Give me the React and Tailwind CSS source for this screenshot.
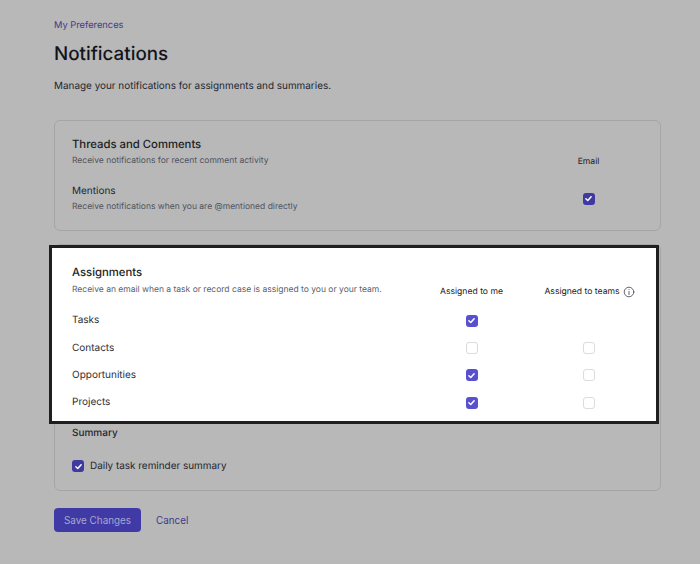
import React from "react";

function Box({ checked, dim }) {
  if (checked) {
    return (
      <span className={`flex h-3 w-3 items-center justify-center rounded-[3px] ${dim ? "bg-[#403aa0]" : "bg-[#5850cf]"}`}>
        <svg viewBox="0 0 12 12" className="h-[9px] w-[9px]" fill="none" stroke="white" strokeWidth="2" strokeLinecap="round" strokeLinejoin="round">
          <path d="M2.5 6.3 5 8.6 9.5 3.6" />
        </svg>
      </span>
    );
  }
  return <span className="block h-3 w-3 rounded-[3px] border border-[#dcdcdc] bg-white" />;
}

function Row({ label, me, team }) {
  return (
    <div className="flex h-[27.4px] items-center">
      <div className="flex-1 text-[10px] text-[#2d3038]">{label}</div>
      <div className="flex w-[117px] justify-center"><Box checked={me} /></div>
      <div className="flex w-[117px] justify-center">{team !== undefined && <Box checked={team} />}</div>
    </div>
  );
}

export default function App() {
  return (
    <div className="h-[564px] w-[700px] overflow-hidden bg-[#b8b8b8] pl-[54px] pt-[18px] font-['Inter',sans-serif] [text-rendering:geometricPrecision]">
      <div className="w-[607px]">
        <div className="pt-[0.5px] text-[9.3px] leading-[14px] text-[#3f3a8c]">My Preferences</div>
        <h1 className="mt-[7.5px] text-[18.8px] font-medium leading-[28px] text-[#12141c]">Notifications</h1>
        <p className="mt-[10px] text-[9.93px] leading-[16px] text-[#24262e]">Manage your notifications for assignments and summaries.</p>

        <section className="mt-[26px] h-[111px] rounded-md border border-[#a5a5a5] px-[17px] pt-[15px]">
          <div className="flex">
            <div className="flex-1">
              <h2 className="text-[11.3px] font-medium leading-[16px] text-[#1b1d24]">Threads and Comments</h2>
              <p className="pt-[1px] text-[8.5px] leading-[16px] text-[#50535d]">Receive notifications for recent comment activity</p>
            </div>
            <div className="flex w-[109px] items-end justify-center text-[8.6px] leading-[14px] text-[#1b1d24]">Email</div>
          </div>
          <div className="mt-[13px] flex items-center">
            <div className="flex-1">
              <div className="pt-[1px] text-[10px] leading-[16px] text-[#24262e]">Mentions</div>
              <div className="text-[8.5px] leading-[16px] text-[#50535d]">Receive notifications when you are @mentioned directly</div>
            </div>
            <div className="flex w-[109px] justify-center"><Box checked dim /></div>
          </div>
        </section>

        <section className="mt-[13px] h-[247px] rounded-md border border-[#a5a5a5] px-[17px]">
          <div className="relative z-10 -ml-[23px] -mr-[16px] h-[179px] border-[3px] border-[#1f1f1f] bg-white pl-[20px] pr-[9px] pt-[16px]">
            <div className="flex h-[37px]">
              <div className="flex-1">
                <h2 className="text-[11.3px] font-medium leading-[16px] text-[#1b1d24]">Assignments</h2>
                <p className="pt-[1px] text-[8.5px] leading-[18px] text-[#5a5f6e]">Receive an email when a task or record case is assigned to you or your team.</p>
              </div>
              <div className="flex w-[117px] items-end justify-center text-[8.6px] leading-[18px] text-[#1b1d24]">Assigned to me</div>
              <div className="flex w-[117px] items-end justify-center gap-[3px] pl-[2px] text-[8.6px] leading-[18px] text-[#1b1d24]">
                <span>Assigned to teams</span>
                <svg viewBox="0 0 12 12" className="mb-[3px] h-3 w-3" fill="none" stroke="#3a3d45" strokeWidth="0.8" strokeLinecap="round">
                  <circle cx="6" cy="6" r="4.8" />
                  <path d="M6 5.5V8.6M6 3.5v.2" />
                </svg>
              </div>
            </div>
            <div className="mt-[6px]">
              <Row label="Tasks" me />
              <Row label="Contacts" me={false} team={false} />
              <Row label="Opportunities" me team={false} />
              <Row label="Projects" me team={false} />
            </div>
          </div>
          <h3 className="pt-[1px] text-[10px] font-medium leading-[16px] text-[#24262e]">Summary</h3>
          <label className="mt-[17px] flex items-center gap-[6px] text-[9.93px] leading-[16px] text-[#24262e]">
            <Box checked dim />
            Daily task reminder summary
          </label>
        </section>

        <div className="mt-[17px] flex items-center">
          <button className="h-[23.5px] w-[87px] rounded-[4px] bg-[#3f3aa5] pt-[1px] text-[9.9px] text-[#a9a6cf]">Save Changes</button>
          <button className="ml-[15px] pt-[1px] text-[9.9px] text-[#3f3a8c]">Cancel</button>
        </div>
      </div>
    </div>
  );
}
